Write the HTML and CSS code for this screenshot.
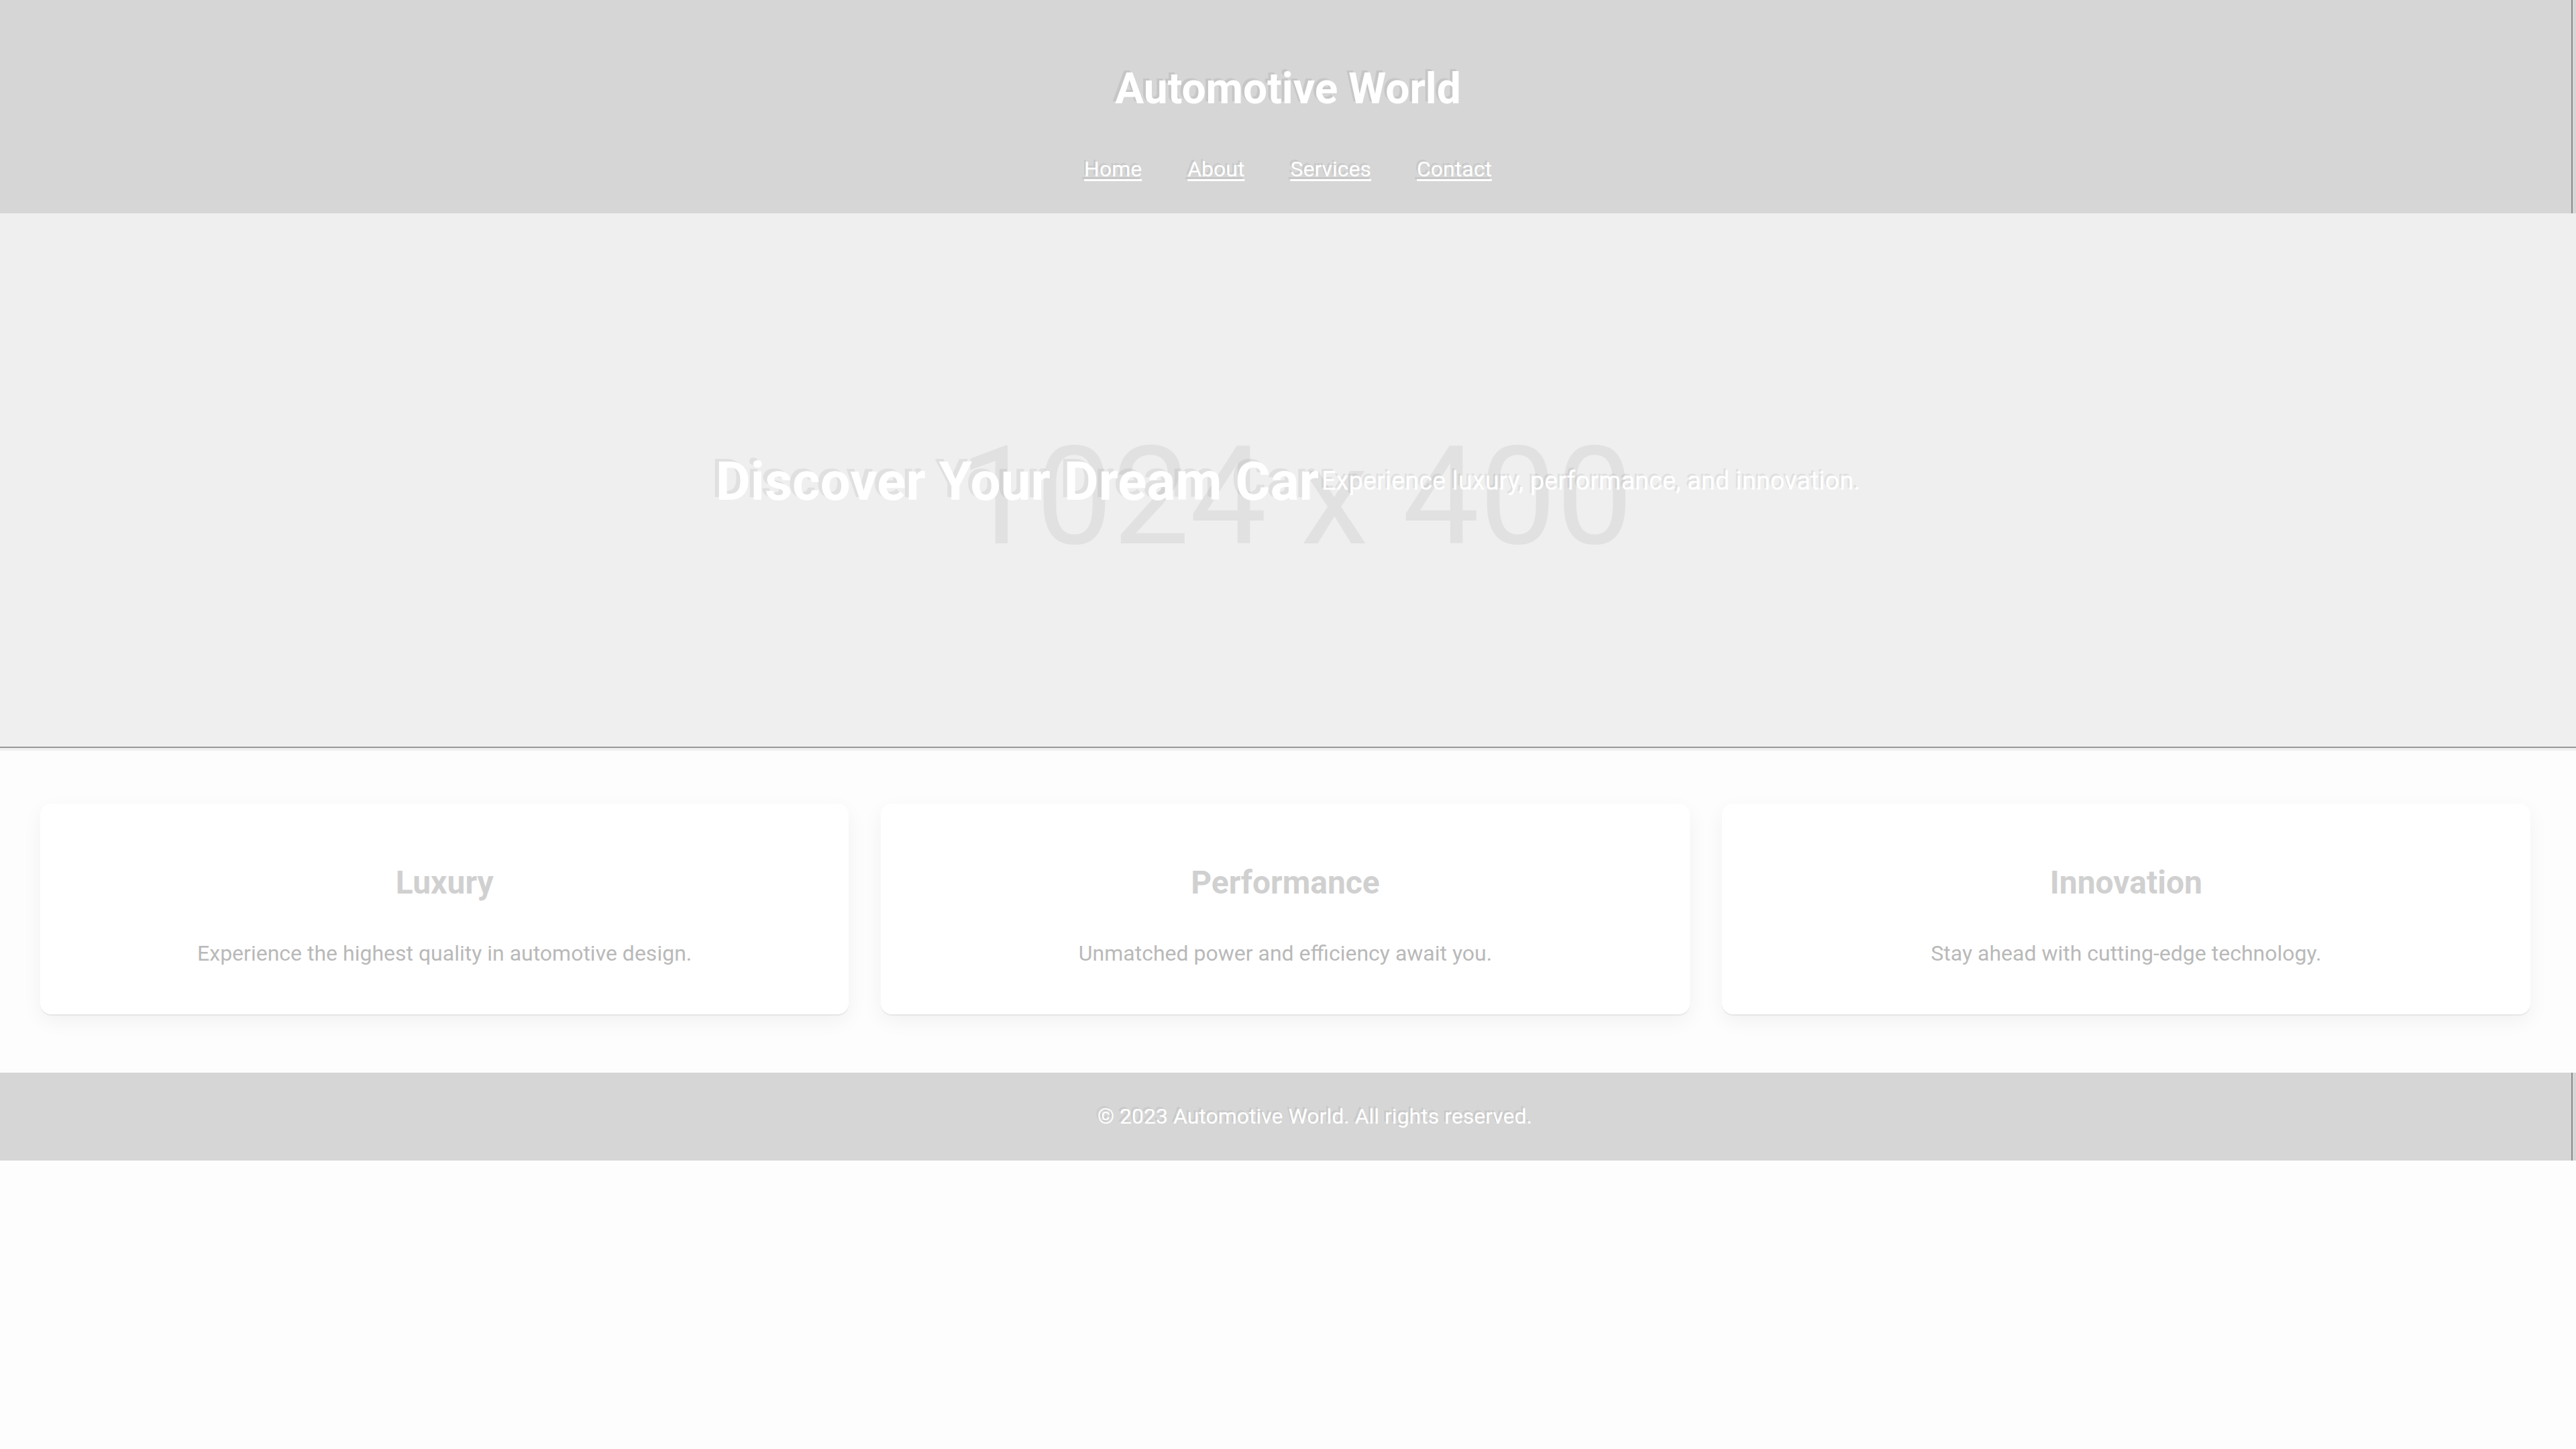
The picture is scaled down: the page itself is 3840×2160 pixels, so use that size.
FILE: index.html
```html
<!DOCTYPE html>
<html lang="en">
<head>
<meta charset="utf-8">
<title>Automotive World</title>
<link rel="stylesheet" href="styles.css">
</head>
<body>
<header class="site-header">
  <h1 class="site-title">Automotive World</h1>
  <nav class="site-nav">
    <a href="#" class="nav-link">Home</a>
    <a href="#" class="nav-link">About</a>
    <a href="#" class="nav-link">Services</a>
    <a href="#" class="nav-link">Contact</a>
  </nav>
</header>
<section class="hero">
  <div class="hero-placeholder">1024 x 400</div>
  <div class="hero-content">
    <h2 class="hero-title">Discover Your Dream Car</h2>
    <p class="hero-text">Experience luxury, performance, and innovation.</p>
  </div>
</section>
<main class="features">
  <div class="card">
    <h3 class="card-title">Luxury</h3>
    <p class="card-text">Experience the highest quality in automotive design.</p>
  </div>
  <div class="card">
    <h3 class="card-title">Performance</h3>
    <p class="card-text">Unmatched power and efficiency await you.</p>
  </div>
  <div class="card">
    <h3 class="card-title">Innovation</h3>
    <p class="card-text">Stay ahead with cutting-edge technology.</p>
  </div>
</main>
<footer class="site-footer">
  <p class="footer-text">&copy; 2023 Automotive World. All rights reserved.</p>
</footer>
</body>
</html>
```

FILE: styles.css
```css
* { box-sizing: border-box; }

body {
  margin: 0;
  background: #fdfdfd;
  font-family: Roboto, "Liberation Sans", Arial, sans-serif;
  color: #ffffff;
}

.site-header {
  background: #d6d6d6;
  height: 318px;
  padding: 95px 0 0;
  display: flex;
  flex-direction: column;
  align-items: center;
  box-shadow: inset -5px 0 0 #d6d6d6, inset -7px 0 0 #8c8c8c;
}

.site-title {
  margin: 0;
  font-size: 64px;
  line-height: 75px;
  font-weight: 700;
  color: #ffffff;
  text-shadow: -4px -3px 0 rgba(0, 0, 0, 0.07);
}

.site-nav {
  margin-top: 64px;
  display: flex;
  gap: 68px;
}

.nav-link {
  font-size: 32px;
  line-height: 37px;
  color: #ffffff;
  text-decoration: underline;
  text-underline-offset: 4px;
  text-decoration-thickness: 3px;
  text-shadow: -3px -3px 0 rgba(0, 0, 0, 0.07);
}

.hero {
  height: 801px;
  background: #efefef;
  display: grid;
  box-shadow: inset 0 -4px 0 #efefef, inset 0 -6px 0 #999999;
}

.hero-placeholder {
  grid-area: 1 / 1;
  justify-self: center;
  align-self: center;
  padding: 44px 0 0 24px;
  font-size: 204px;
  line-height: 239px;
  color: #e1e1e1;
  font-weight: 400;
}

.hero-content {
  grid-area: 1 / 1;
  display: flex;
  justify-content: center;
  align-items: center;
  gap: 4px;
  padding-bottom: 2px;
}

.hero-title {
  margin: 0;
  font-size: 80px;
  line-height: 94px;
  font-weight: 700;
  color: #ffffff;
  text-shadow: -6px -4px 0 rgba(0, 0, 0, 0.06);
}

.hero-text {
  margin: 0;
  font-size: 38px;
  line-height: 45px;
  color: #ffffff;
  text-shadow: -3px -3px 0 rgba(0, 0, 0, 0.08);
}

.features {
  display: grid;
  grid-template-columns: repeat(3, 1fr);
  gap: 48px;
  padding: 79px 68px 87px 60px;
}

.card {
  background: #ffffff;
  border-radius: 16px;
  height: 314px;
  padding: 90px 40px 0;
  text-align: center;
  box-shadow: 0 2px 0 rgba(0, 0, 0, 0.06), 0 10px 30px rgba(0, 0, 0, 0.05);
}

.card-title {
  margin: 0 0 59px;
  font-size: 48px;
  line-height: 56px;
  font-weight: 700;
  color: #d0d0d0;
  text-shadow: -3px -3px 0 rgba(255, 255, 255, 0.6);
}

.card-text {
  margin: 0;
  font-size: 32px;
  line-height: 37px;
  color: #b9b9b9;
}

.site-footer {
  background: #d6d6d6;
  height: 131px;
  padding-left: 80px;
  display: flex;
  align-items: center;
  justify-content: center;
  box-shadow: inset -5px 0 0 #d6d6d6, inset -7px 0 0 #8c8c8c;
}

.footer-text {
  margin: 0;
  font-size: 32px;
  line-height: 37px;
  color: #ffffff;
  text-shadow: -3px -3px 0 rgba(0, 0, 0, 0.07);
}
```
